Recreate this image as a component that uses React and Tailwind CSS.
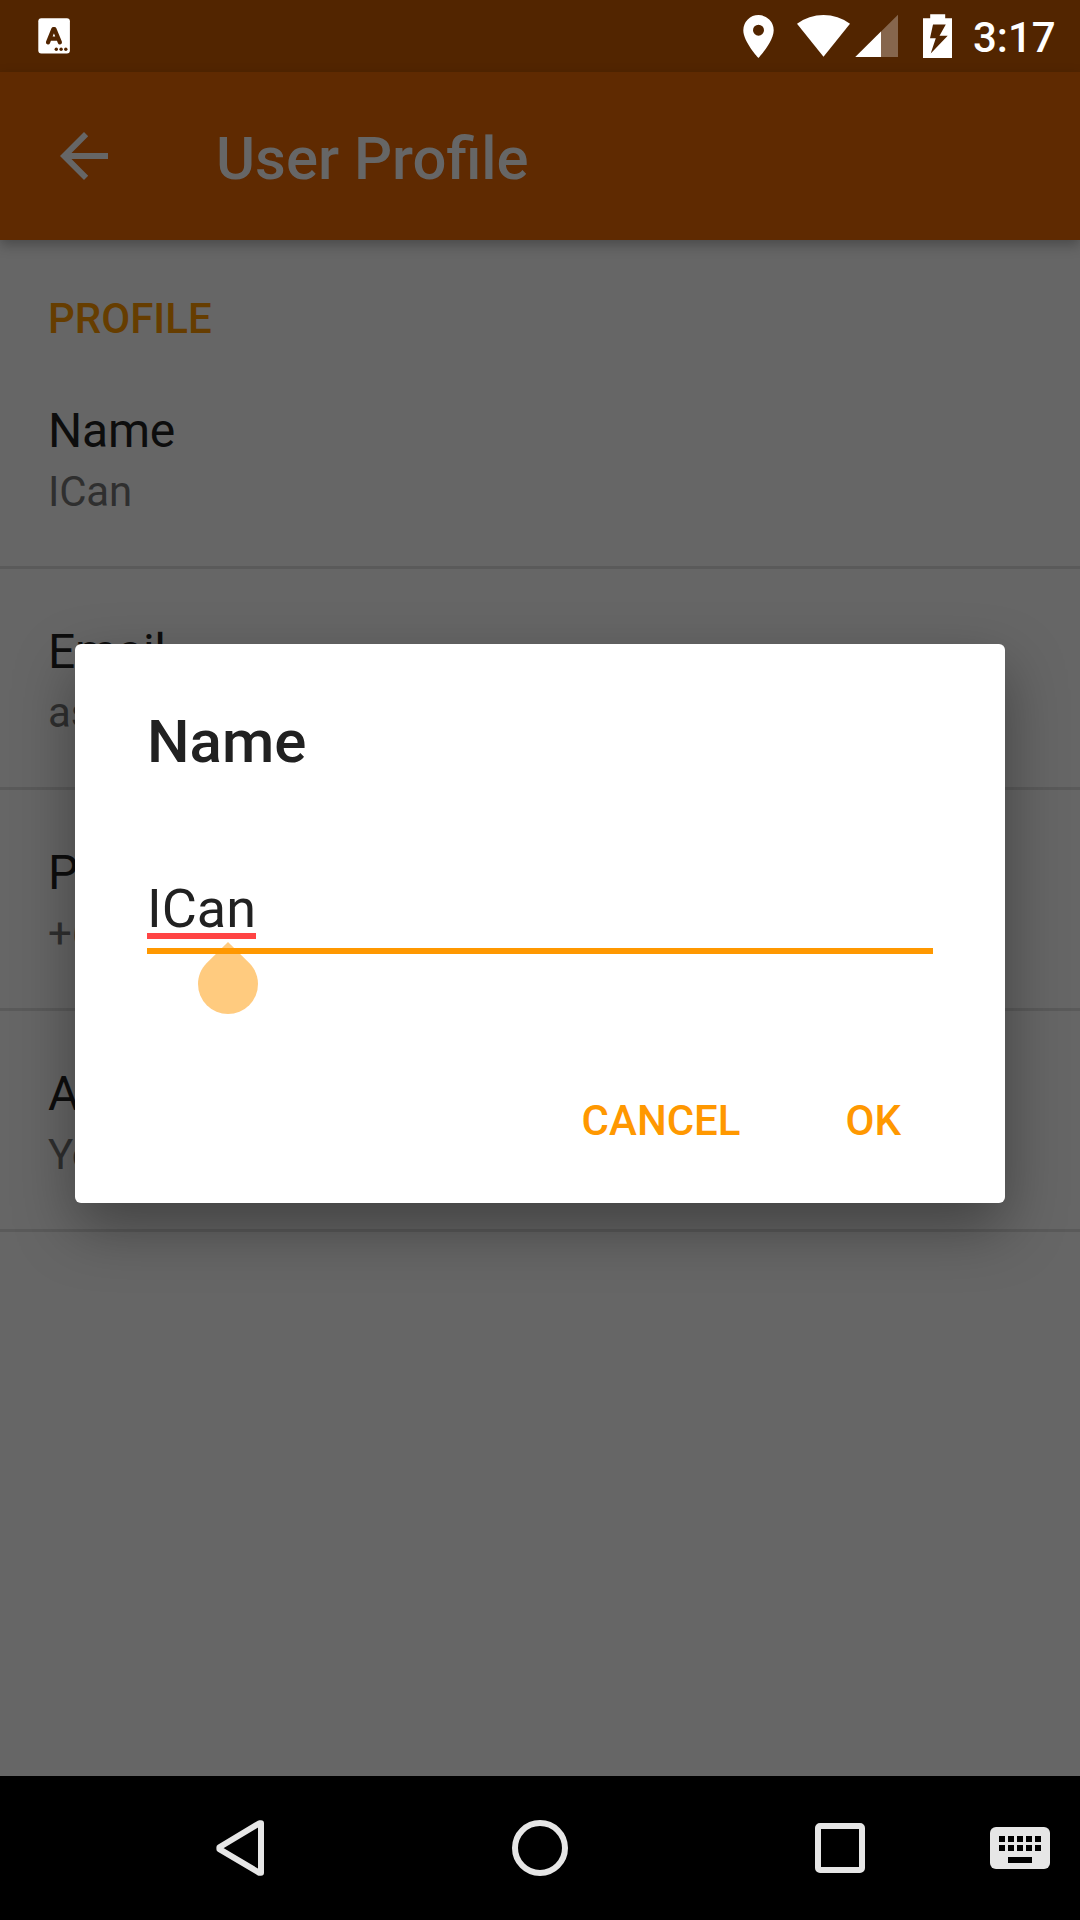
const rows = [
  { title: "Name", value: "ICan" },
  { title: "Email", value: "asd" },
  { title: "Phone", value: "+6" },
  { title: "Address", value: "Your" },
];

function StatusBar() {
  return (
    <div className="flex h-[72px] shrink-0 items-center bg-[#522500] pl-[38px] pr-[24px]">
      <svg className="h-[36px] w-[32px]" viewBox="0 0 32 36">
        <rect x="0.3" y="0.3" width="31.6" height="35.2" rx="3" fill="#fff" />
        <path d="M10 24.400 15.400 11h1L21.900 24.400M12 20.600h8" fill="none" stroke="#522500" strokeWidth="4.200" strokeLinecap="round" strokeLinejoin="round" />
        <g fill="#522500">
          <circle cx="18.3" cy="31.3" r="1.7" />
          <circle cx="23.1" cy="31.3" r="1.7" />
          <circle cx="27.8" cy="31.3" r="1.7" />
        </g>
      </svg>
      <div className="ml-auto flex h-full items-center">
        <svg className="h-[72px] w-[231px]" viewBox="743 0 231 72" fill="#fff">
          <path fillRule="evenodd" d="M758.5 15a15.2 15.2 0 0 0-15.2 15.2C743.3 41.600 758.500 58 758.500 58s15.200-16.400 15.200-27.800A15.200 15.200 0 0 0 758.500 15zm0 20.700a5.500 5.500 0 1 1 0-11 5.500 5.500 0 0 1 0 11z" />
          <path d="M797 23.700A45 45 0 0 1 850 23.700L823.500 56.700z" />
          <path d="M898 14.800V57H855.300z" opacity="0.3" />
          <path d="M881 31.600V57H855.300z" />
          <path fillRule="evenodd" d="M930.200 14.200h15v4.100h6.800V58h-29V18.300h7.200zM933 24.600l-3 13.600h5.800L930.700 53.500 947.700 35.800H939.500L945.800 24.600z" />
        </svg>
        <span className="-ml-px w-[83px] whitespace-nowrap pt-[3px] text-[42px] font-medium leading-[48px] text-white">3:17</span>
      </div>
    </div>
  );
}

function Toolbar() {
  return (
    <header className="z-[1] flex h-[168px] shrink-0 items-center bg-[#5f2a01] pl-[60px] shadow-[0_5px_12px_0_rgba(0,0,0,0.28)]">
      <svg className="h-[48px] w-[48px]" viewBox="0 0 48 48" fill="#666">
        <path d="M48 21H11.500L28.200 4.200 24 0 0 24 24 48 28.200 43.800 11.500 27H48z" />
      </svg>
      <h1 className="ml-[108px] pt-[5px] text-[59.8px] font-medium leading-[72px] text-[#666]">User Profile</h1>
    </header>
  );
}

function NameDialog() {
  return (
    <div role="dialog" className="absolute left-[75px] top-[644px] z-10 flex h-[559px] w-[930px] flex-col rounded-[6px] bg-white px-[72px] shadow-[0_24px_60px_0_rgba(0,0,0,0.36)]">
      <h2 className="mt-[62px] text-[60px] font-medium leading-[72px] text-[#212121]">Name</h2>
      <div className="relative mt-[90px] flex h-[86px] flex-col items-start border-b-[6px] border-[#ff9800]">
        <span className="h-[71px] border-b-[6px] border-[#ff4444] text-[54px] leading-[82px] text-[#212121]">ICan</span>
        <svg className="absolute left-[51px] top-[74px] h-[72px] w-[60px]" viewBox="0 0 60 72" fill="#ff9800" fillOpacity="0.5">
          <path d="M30 0 51.500 21.300C57 27 60 34 60 42A30 30 0 0 1 0 42C0 34 3 27 8.500 21.300z" />
        </svg>
      </div>
      <div className="mt-[143px] flex justify-end gap-[105px] pr-[32px] text-[42px] font-medium leading-[48px] text-[#ff9800]">
        <button>CANCEL</button>
        <button>OK</button>
      </div>
    </div>
  );
}

function NavBar() {
  return (
    <nav className="flex h-[144px] shrink-0 items-center bg-black pl-[90px] pr-[30px]">
      <div className="flex w-[300px] justify-center">
        <svg className="h-[56px] w-[48px]" viewBox="0 0 48 56" fill="none" stroke="#e6e6e6" strokeWidth="6" strokeLinejoin="round">
          <path d="M45 3.200v49.600H43.400L3.400 29.200v-2L43.400 3.200z" />
        </svg>
      </div>
      <div className="flex w-[300px] justify-center">
        <div className="h-[56px] w-[56px] rounded-full border-[6px] border-[#e6e6e6]" />
      </div>
      <div className="flex w-[300px] justify-center">
        <div className="h-[50px] w-[50px] rounded-[5px] border-[6px] border-[#e6e6e6]" />
      </div>
      <svg className="h-[42px] w-[60px]" viewBox="0 0 60 42">
        <rect width="60" height="42" rx="6" fill="#e6e6e6" />
        <path d="M9 9h6v6H9zM18 9h6v6h-6zM27 9h6v6h-6zM36 9h6v6h-6zM45 9h6v6h-6zM9 18h6v6H9zM18 18h6v6h-6zM27 18h6v6h-6zM36 18h6v6h-6zM45 18h6v6h-6zM18 30h24v6H18z" />
      </svg>
    </nav>
  );
}

export default function App() {
  return (
    <div className="relative flex h-[1920px] w-[1080px] flex-col overflow-hidden bg-[#666] font-['Roboto',sans-serif]">
      <StatusBar />
      <Toolbar />
      <main className="flex-1">
        <h3 className="h-[108px] pl-[48px] pt-[55px] text-[42px] font-medium leading-[48px] text-[#663d00]">PROFILE</h3>
        {rows.map((row) => (
          <div key={row.title} className="flex h-[221px] flex-col gap-[8px] border-b-[3px] border-[#5a5a5a] pl-[48px] pt-[55px]">
            <div className="text-[48px] leading-[56px] tracking-[-0.2px] text-[#0d0d0d]">{row.title}</div>
            <div className="text-[42px] leading-[50px] tracking-[-0.2px] text-[#2f2f2f]">{row.value}</div>
          </div>
        ))}
      </main>
      <NavBar />
      <NameDialog />
    </div>
  );
}
